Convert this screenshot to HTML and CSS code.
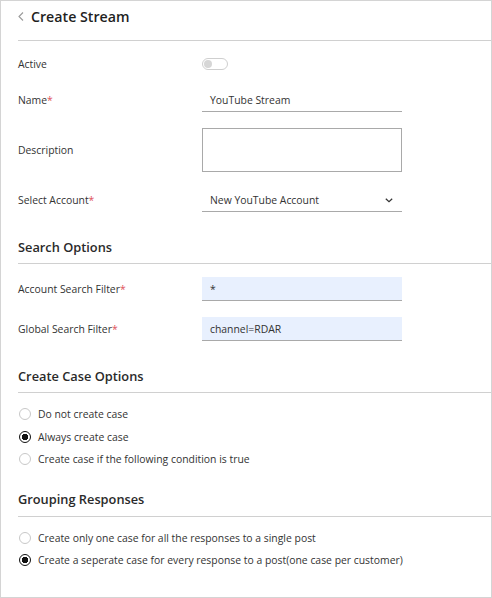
FILE: index.html
```html
<!DOCTYPE html>
<html>
<head>
<meta charset="utf-8">
<link rel="stylesheet" href="styles.css">
</head>
<body>
<div class="panel">
  <div class="header">
    <svg class="back" width="6" height="9" viewBox="0 0 6 9"><path d="M5 0.5 L1 4.5 L5 8.5" fill="none" stroke="#9a9a9a" stroke-width="1.1"/></svg>
    <span class="title">Create Stream</span>
  </div>

  <div class="fields first">
    <div class="row row-toggle">
      <span class="label">Active</span>
      <span class="toggle"><span class="knob"></span></span>
    </div>
    <div class="row">
      <span class="label">Name<span class="req">*</span></span>
      <div class="input">YouTube Stream</div>
    </div>
    <div class="row">
      <span class="label">Description</span>
      <div class="textarea"></div>
    </div>
    <div class="row">
      <span class="label">Select Account<span class="req">*</span></span>
      <div class="input select">New YouTube Account
        <svg class="caret" width="8" height="5" viewBox="0 0 8 5"><path d="M0.8 0.8 L4 3.8 L7.2 0.8" fill="none" stroke="#333" stroke-width="1.2"/></svg>
      </div>
    </div>
  </div>

  <div class="section-head">Search Options</div>
  <div class="fields search">
    <div class="row">
      <span class="label">Account Search Filter<span class="req">*</span></span>
      <div class="input filled">*</div>
    </div>
    <div class="row">
      <span class="label">Global Search Filter<span class="req">*</span></span>
      <div class="input filled">channel=RDAR</div>
    </div>
  </div>

  <div class="section-head">Create Case Options</div>
  <div class="radios">
    <div class="radio-row"><span class="radio"></span>Do not create case</div>
    <div class="radio-row"><span class="radio checked"></span>Always create case</div>
    <div class="radio-row"><span class="radio"></span>Create case if the following condition is true</div>
  </div>

  <div class="section-head after-radios">Grouping Responses</div>
  <div class="radios">
    <div class="radio-row"><span class="radio"></span>Create only one case for all the responses to a single post</div>
    <div class="radio-row"><span class="radio checked"></span>Create a seperate case for every response to a post(one case per customer)</div>
  </div>
</div>
</body>
</html>
```

FILE: styles.css
```css
* { box-sizing: border-box; }
html, body { margin: 0; padding: 0; background: #fff; }
body {
  font-family: "Open Sans", "Noto Sans", sans-serif;
  color: #333;
  width: 492px;
  height: 598px;
}
.panel {
  width: 492px;
  height: 598px;
  border: 1px solid #d4d4d4;
  padding-left: 17px;
}
.header {
  height: 40px;
  border-bottom: 1px solid #d0d0d0;
  display: flex;
  align-items: center;
  padding-bottom: 8px;
}
.back { margin-right: 7px; }
.title {
  font-size: 14.2px;
  font-weight: 600;
  color: #1f1f1f;
}
.fields {
  display: flex;
  flex-direction: column;
  gap: 16px;
}
.fields.first { padding-top: 11px; }
.fields.search { padding-top: 13px; }
.row {
  display: grid;
  grid-template-columns: 184px 200px;
  align-items: center;
  min-height: 24px;
}
.row-toggle { margin-bottom: -4px; }
.label {
  font-size: 10.4px;
  color: #333;
}
.req { color: #e0505a; }
.toggle {
  width: 26px;
  height: 12px;
  border: 1px solid #cfcfcf;
  border-radius: 6px;
  display: flex;
  align-items: center;
  padding-left: 1px;
}
.knob {
  width: 8px;
  height: 8px;
  border-radius: 50%;
  background: #d6d6d6;
}
.input {
  height: 24px;
  border-bottom: 1px solid #a9a9a9;
  font-size: 10.4px;
  color: #333;
  padding-left: 8px;
  display: flex;
  align-items: center;
}
.input.filled { background: #e8f0fe; }
.select { justify-content: space-between; padding-right: 9px; }
.caret { margin-top: 2px; }
.textarea {
  height: 44px;
  border: 1px solid #a9a9a9;
}
.section-head {
  margin-top: 25px;
  font-size: 12.8px;
  font-weight: 600;
  color: #2a2a2a;
  line-height: 20px;
  padding-bottom: 6px;
  border-bottom: 1px solid #d0d0d0;
}
.section-head.after-radios { margin-top: 18px; padding-bottom: 7px; }
.radios {
  padding-top: 10px;
  display: flex;
  flex-direction: column;
}
.radio-row {
  height: 22.5px;
  display: flex;
  align-items: center;
  font-size: 10.4px;
  color: #333;
}
.radio {
  width: 12px;
  height: 12px;
  border-radius: 50%;
  border: 1px solid #c8c8c8;
  margin-left: 1px;
  margin-right: 7px;
  flex: none;
  background: #fff;
}
.radio.checked {
  border: 1.5px solid #111;
  background: radial-gradient(circle, #111 0 3px, #fff 3.5px);
}
```
